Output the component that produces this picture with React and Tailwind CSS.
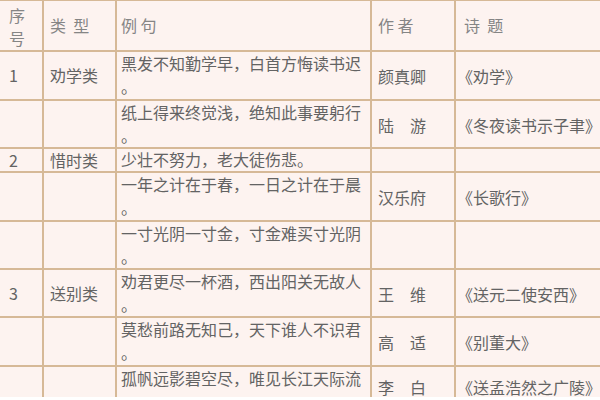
import React from 'react';

const rows = [
  { no: '1', type: '劝学类', text: '黑发不知勤学早，白首方悔读书迟', wrap: true, author: '颜真卿', title: '《劝学》', h: 'h-[49px]' },
  { no: '', type: '', text: '纸上得来终觉浅，绝知此事要躬行', wrap: true, author: '陆　游', title: '《冬夜读书示子聿》', h: 'h-[48px]' },
  { no: '2', type: '惜时类', text: '少壮不努力，老大徒伤悲。', wrap: false, author: '', title: '', h: 'h-[24px]' },
  { no: '', type: '', text: '一年之计在于春，一日之计在于晨', wrap: true, author: '汉乐府', title: '《长歌行》', h: 'h-[49px]' },
  { no: '', type: '', text: '一寸光阴一寸金，寸金难买寸光阴', wrap: true, author: '', title: '', h: 'h-[48px]' },
  { no: '3', type: '送别类', text: '劝君更尽一杯酒，西出阳关无故人', wrap: true, author: '王　维', title: '《送元二使安西》', h: 'h-[47px]' },
  { no: '', type: '', text: '莫愁前路无知己，天下谁人不识君', wrap: true, author: '高　适', title: '《别董大》', h: 'h-[49px]' },
  { no: '', type: '', text: '孤帆远影碧空尽，唯见长江天际流', wrap: true, author: '李　白', title: '《送孟浩然之广陵》', h: 'h-[46px]', last: true },
];

const cell = 'border-2 border-[#d6b997] p-0 align-middle';

export default function App() {
  return (
    <div className="w-[600px] h-[397px] overflow-hidden bg-[#fdf3f0] text-[16px] leading-[23px] text-[#636363] font-['Noto_Sans_CJK_SC','Noto_Sans',sans-serif]">
      <table className="w-[604px] -ml-[2px] -mt-[1px] table-fixed border-collapse">
        <colgroup>
          <col className="w-[44px]" />
          <col className="w-[73px]" />
          <col className="w-[255px]" />
          <col className="w-[84px]" />
          <col className="w-[148px]" />
        </colgroup>
        <thead>
          <tr className="h-[48px] text-[#858585]">
            <th className={`${cell} pl-[9px] pt-[3px] text-left font-normal`}>序<br />号</th>
            <th className={`${cell} pl-[6px] text-left font-normal whitespace-pre`}>类  型</th>
            <th className={`${cell} pl-[4px] text-left font-normal whitespace-pre`}>例 句</th>
            <th className={`${cell} pl-[6px] text-left font-normal whitespace-pre`}>作 者</th>
            <th className={`${cell} pl-[8px] text-left font-normal whitespace-pre`}>诗  题</th>
          </tr>
        </thead>
        <tbody>
          {rows.map((r, i) => (
            <tr key={i} className={r.h}>
              <td className={`${cell} pl-[9px] ${r.wrap ? '' : 'leading-[20px]'}`}>{r.no}</td>
              <td className={`${cell} pl-[6px] ${r.wrap ? '' : 'leading-[20px]'}`}>{r.type}</td>
              <td className={`${cell} pl-[4px] align-top whitespace-nowrap ${r.wrap ? '' : 'leading-[20px]'}`}>
                {r.text}
                {r.wrap && <><br />。</>}
              </td>
              <td className={`${cell} pl-[6px] whitespace-nowrap ${r.last ? 'pb-[6px]' : 'pt-[2px]'}`}>{r.author}</td>
              <td className={`${cell} pl-[1px] whitespace-nowrap ${r.last ? 'pb-[6px]' : 'pt-[2px]'}`}>{r.title}</td>
            </tr>
          ))}
        </tbody>
      </table>
    </div>
  );
}
